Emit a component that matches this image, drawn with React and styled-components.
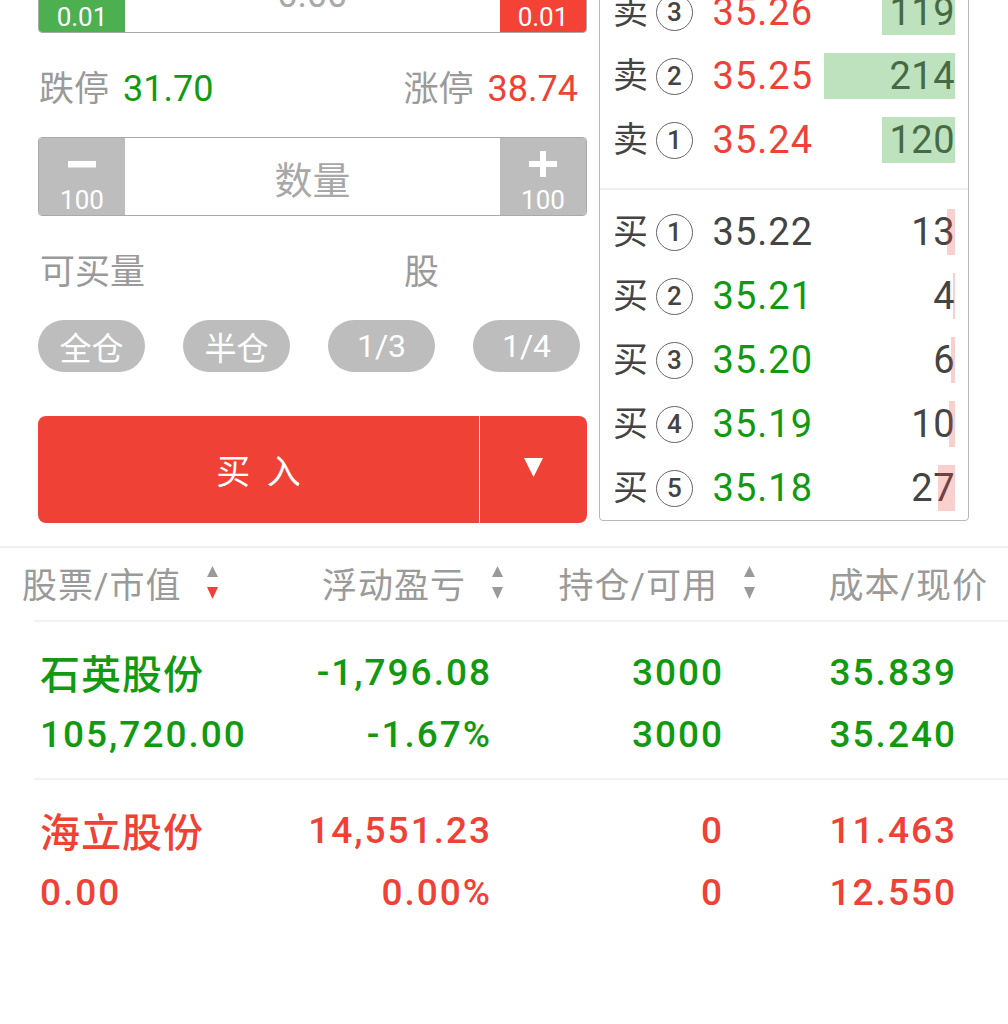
import React from 'react';
import styled, { createGlobalStyle } from 'styled-components';

const GREEN = '#119a11';
const RED = '#ef4136';
const LABEL = '#9a9a9a';
const DARK = '#444444';
const FONT = `Roboto, "Noto Sans CJK SC", sans-serif`;

const Global = createGlobalStyle`
  html, body { margin: 0; padding: 0; background: #fff; }
  body { font-family: ${FONT}; overflow: hidden; }
  * { box-sizing: border-box; }
`;

const Page = styled.div`
  width: 1008px;
  height: 1024px;
  overflow: hidden;
  background: #fff;
`;

const TopSection = styled.div`
  display: flex;
  align-items: flex-start;
  gap: 12px;
  padding: 0 39px 0 38px;
  margin-top: -156px;
`;

const LeftCol = styled.div`
  width: 549px;
  padding-top: 110px;
  display: flex;
  flex-direction: column;
`;

const Stepper = styled.div`
  height: 79px;
  border: 1px solid #aaaaaa;
  border-radius: 4px;
  overflow: hidden;
  display: flex;
`;

const StepBtn = styled.div`
  width: 86px;
  background: ${(p) => p.$bg};
  display: flex;
  flex-direction: column;
  align-items: center;
  padding-top: 13px;
  color: #fff;
`;

const StepLabel = styled.div`
  margin-top: 8px;
  font-size: 26px;
  line-height: 30px;
`;

const StepCenter = styled.div`
  flex: 1;
  display: flex;
  align-items: center;
  justify-content: center;
  color: #a8a8a8;
  font-size: ${(p) => (p.$cjk ? '38px' : '36px')};
  padding-top: 2px;
`;

const LimitRow = styled.div`
  height: 104px;
  display: flex;
  align-items: center;
  justify-content: space-between;
  padding: 0 9px 0 1px;
`;

const Limit = styled.div`
  display: flex;
  align-items: baseline;
`;

const Label = styled.span`
  color: ${LABEL};
  font-size: 35px;
`;

const Value = styled.span`
  color: ${(p) => p.$color};
  font-size: 36px;
  margin-left: 14px;
`;

const AvailRow = styled.div`
  height: 104px;
  display: grid;
  grid-template-columns: 364px auto;
  align-items: center;
  padding-left: 2px;
`;

const Pills = styled.div`
  display: flex;
  gap: 38px;
  height: 52px;
`;

const Pill = styled.div`
  width: 107px;
  height: 52px;
  border-radius: 26px;
  background: #bdbdbd;
  color: #fff;
  font-size: 32px;
  display: flex;
  align-items: center;
  justify-content: center;
`;

const BuyButton = styled.div`
  margin-top: 44px;
  height: 107px;
  border-radius: 8px;
  background: ${RED};
  display: flex;
  color: #fff;
`;

const BuyMain = styled.div`
  flex: 1;
  display: flex;
  align-items: center;
  justify-content: center;
  font-size: 34px;
  letter-spacing: 4px;
  white-space: pre;
  padding-left: 4px;
  border-right: 1px solid rgba(255, 255, 255, 0.85);
`;

const BuyMore = styled.div`
  width: 107px;
  display: flex;
  align-items: center;
  justify-content: center;
  padding-bottom: 4px;
`;

/* order book */
const Book = styled.div`
  width: 370px;
  border: 1px solid #b8b8b8;
  border-radius: 4px;
  padding: 0 13px;
`;

const BookSection = styled.div`
  padding: ${(p) => p.$pad};
`;

const BookDivider = styled.div`
  height: 2px;
  background: #eeeeee;
  margin: 0 -13px;
`;

const BookRow = styled.div`
  height: 64px;
  display: grid;
  grid-template-columns: 36px 44px 119px 143px;
  align-items: center;
`;

const Side = styled.span`
  color: ${DARK};
  font-size: 35px;
  line-height: 1;
`;

const Circle = styled.span`
  margin-left: 7px;
  width: 37px;
  height: 37px;
  border-radius: 50%;
  border: 1.5px solid #666666;
  color: ${DARK};
  font-size: 26px;
  font-weight: 500;
  line-height: 1;
  display: flex;
  align-items: center;
  justify-content: center;
`;

const Price = styled.span`
  text-align: right;
  color: ${(p) => p.$color};
  font-size: 38px;
  letter-spacing: 1px;
  margin-right: -1px;
`;

const VolCell = styled.div`
  position: relative;
  height: 64px;
  display: flex;
  align-items: center;
  justify-content: flex-end;
  color: ${DARK};
  font-size: 38px;
  letter-spacing: 0.5px;
`;

const Bar = styled.div`
  position: absolute;
  right: 0;
  top: 9px;
  height: 46px;
  background: ${(p) => (p.$side === 'sell' ? 'rgba(76,175,76,0.36)' : 'rgba(239,65,54,0.25)')};
`;

/* table */
const Table = styled.div`
  margin-top: 23px;
`;

const HeaderRow = styled.div`
  border-top: 2px solid #f0f0f0;
  height: 74px;
  display: grid;
  grid-template-columns: repeat(4, 252px);
  align-items: center;
`;

const HeadCell = styled.div`
  display: flex;
  align-items: center;
  justify-content: ${(p) => (p.$first ? 'flex-start' : 'flex-end')};
  gap: 26px;
  padding: ${(p) => p.$pad};
  color: ${LABEL};
  font-size: 35px;
  letter-spacing: 1px;
  white-space: nowrap;
  margin-top: -3px;
`;

const RowDivider = styled.div`
  height: 2px;
  background: #f2f2f2;
  margin-left: 34px;
`;

const StockRow = styled.div`
  height: 156px;
  padding: 19px 0 0 40px;
  display: grid;
  grid-template-columns: 250px 200px 232px 233px;
  color: ${(p) => p.$color};
  font-weight: 500;
`;

const Cell = styled.div`
  display: flex;
  flex-direction: column;
  align-items: ${(p) => (p.$left ? 'flex-start' : 'flex-end')};
  margin-right: ${(p) => (p.$left ? '0' : '-2px')};
`;

const Line = styled.div`
  height: 62px;
  display: flex;
  align-items: center;
  font-size: ${(p) => (p.$cjk ? '40px' : '37px')};
  letter-spacing: ${(p) => (p.$cjk ? '1px' : '2px')};
  white-space: nowrap;
`;

const MinusIcon = () => (
  <svg width="28" height="26" viewBox="0 0 28 26">
    <rect x="0" y="10" width="28" height="6.5" fill="#fff" />
  </svg>
);

const PlusIcon = () => (
  <svg width="28" height="26" viewBox="0 0 28 26">
    <rect x="0" y="10" width="28" height="6" fill="#fff" />
    <rect x="11" y="0" width="6" height="26" fill="#fff" />
  </svg>
);

const SortIcon = ({ down }) => (
  <svg width="11" height="34" viewBox="0 0 11 34">
    <polygon points="0,11 5.5,0 11,11" fill="#9a9a9a" />
    <polygon points="0,21 5.5,33 11,21" fill={down ? RED : '#9a9a9a'} />
  </svg>
);

const Caret = () => (
  <svg width="19" height="19" viewBox="0 0 19 19">
    <polygon points="0,0 19,0 9.5,19" fill="#fff" />
  </svg>
);

const MAX_VOL = 214;
const BAR_W = 131;

const sells = [
  { n: 5, price: '35.30', vol: 56 },
  { n: 4, price: '35.28', vol: 88 },
  { n: 3, price: '35.26', vol: 119 },
  { n: 2, price: '35.25', vol: 214 },
  { n: 1, price: '35.24', vol: 120 },
];

const buys = [
  { n: 1, price: '35.22', vol: 13, color: DARK },
  { n: 2, price: '35.21', vol: 4, color: GREEN },
  { n: 3, price: '35.20', vol: 6, color: GREEN },
  { n: 4, price: '35.19', vol: 10, color: GREEN },
  { n: 5, price: '35.18', vol: 27, color: GREEN },
];

const stocks = [
  {
    name: '石英股份', mv: '105,720.00', pl: '-1,796.08', plp: '-1.67%',
    hold: '3000', avail: '3000', cost: '35.839', price: '35.240', color: GREEN,
  },
  {
    name: '海立股份', mv: '0.00', pl: '14,551.23', plp: '0.00%',
    hold: '0', avail: '0', cost: '11.463', price: '12.550', color: RED,
  },
];

const BookLine = ({ side, n, price, vol, color }) => (
  <BookRow>
    <Side>{side === 'sell' ? '卖' : '买'}</Side>
    <Circle>{n}</Circle>
    <Price $color={color}>{price}</Price>
    <VolCell>
      {vol}
      <Bar $side={side} style={{ width: `${Math.round((vol / MAX_VOL) * BAR_W)}px` }} />
    </VolCell>
  </BookRow>
);

export default function App() {
  return (
    <Page>
      <Global />
      <TopSection>
        <LeftCol>
          <Stepper>
            <StepBtn $bg="#4caf50">
              <MinusIcon />
              <StepLabel>0.01</StepLabel>
            </StepBtn>
            <StepCenter>0.00</StepCenter>
            <StepBtn $bg="#f44336">
              <PlusIcon />
              <StepLabel>0.01</StepLabel>
            </StepBtn>
          </Stepper>

          <LimitRow>
            <Limit>
              <Label>跌停</Label>
              <Value $color={GREEN}>31.70</Value>
            </Limit>
            <Limit>
              <Label>涨停</Label>
              <Value $color={RED}>38.74</Value>
            </Limit>
          </LimitRow>

          <Stepper>
            <StepBtn $bg="#bdbdbd">
              <MinusIcon />
              <StepLabel>100</StepLabel>
            </StepBtn>
            <StepCenter $cjk>数量</StepCenter>
            <StepBtn $bg="#bdbdbd">
              <PlusIcon />
              <StepLabel>100</StepLabel>
            </StepBtn>
          </Stepper>

          <AvailRow>
            <Label>可买量</Label>
            <Label>股</Label>
          </AvailRow>

          <Pills>
            <Pill>全仓</Pill>
            <Pill>半仓</Pill>
            <Pill>1/3</Pill>
            <Pill>1/4</Pill>
          </Pills>

          <BuyButton>
            <BuyMain>买 入</BuyMain>
            <BuyMore>
              <Caret />
            </BuyMore>
          </BuyButton>
        </LeftCol>

        <Book>
          <BookSection $pad="7px 0 16px">
            {sells.map((s) => (
              <BookLine key={s.n} side="sell" n={s.n} price={s.price} vol={s.vol} color={RED} />
            ))}
          </BookSection>
          <BookDivider />
          <BookSection $pad="10px 0 0">
            {buys.map((b) => (
              <BookLine key={b.n} side="buy" n={b.n} price={b.price} vol={b.vol} color={b.color} />
            ))}
          </BookSection>
        </Book>
      </TopSection>

      <Table>
        <HeaderRow>
          <HeadCell $first $pad="0 0 0 22px">
            股票/市值
            <SortIcon down />
          </HeadCell>
          <HeadCell $pad="0 1px 0 0">
            浮动盈亏
            <SortIcon />
          </HeadCell>
          <HeadCell $pad="0 1px 0 0">
            持仓/可用
            <SortIcon />
          </HeadCell>
          <HeadCell $pad="0 20px 0 0">成本/现价</HeadCell>
        </HeaderRow>
        {stocks.map((s) => (
          <React.Fragment key={s.name}>
            <RowDivider />
            <StockRow $color={s.color}>
              <Cell $left>
                <Line $cjk>{s.name}</Line>
                <Line>{s.mv}</Line>
              </Cell>
              <Cell>
                <Line>{s.pl}</Line>
                <Line>{s.plp}</Line>
              </Cell>
              <Cell>
                <Line>{s.hold}</Line>
                <Line>{s.avail}</Line>
              </Cell>
              <Cell>
                <Line>{s.cost}</Line>
                <Line>{s.price}</Line>
              </Cell>
            </StockRow>
          </React.Fragment>
        ))}
      </Table>
    </Page>
  );
}
